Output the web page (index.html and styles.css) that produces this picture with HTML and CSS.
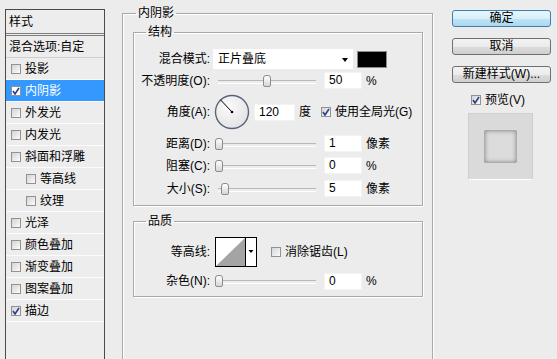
FILE: index.html
```html
<!DOCTYPE html>
<html lang="zh-CN">
<head>
    <meta charset="UTF-8">
    <title>图层样式 - 内阴影</title>
    <link rel="stylesheet" href="styles.css">
</head>
<body>
<div class="dialog">
    <div class="styles-panel">
        <div class="panel-head">样式</div>
        <div class="panel-row blend">混合选项:自定</div>
        <div class="panel-row"><span class="cb"></span>投影</div>
        <div class="panel-row active"><span class="cb"><svg width="8" height="8" viewBox="0 0 8 8"><polyline points="1,4 3,7 7,1" fill="none" stroke="#2b3f8c" stroke-width="1.6"/></svg></span>内阴影</div>
        <div class="panel-row"><span class="cb"></span>外发光</div>
        <div class="panel-row"><span class="cb"></span>内发光</div>
        <div class="panel-row"><span class="cb"></span>斜面和浮雕</div>
        <div class="panel-row sub"><span class="cb"></span>等高线</div>
        <div class="panel-row sub"><span class="cb"></span>纹理</div>
        <div class="panel-row"><span class="cb"></span>光泽</div>
        <div class="panel-row"><span class="cb"></span>颜色叠加</div>
        <div class="panel-row"><span class="cb"></span>渐变叠加</div>
        <div class="panel-row"><span class="cb"></span>图案叠加</div>
        <div class="panel-row"><span class="cb"><svg width="8" height="8" viewBox="0 0 8 8"><polyline points="1,4 3,7 7,1" fill="none" stroke="#2b3f8c" stroke-width="1.6"/></svg></span>描边</div>
    </div>

    <fieldset class="group outer">
        <legend>内阴影</legend>

        <fieldset class="group structure">
            <legend>结构</legend>
            <div class="row h22">
                <span class="lbl">混合模式:</span>
                <div class="select">正片叠底<span class="caret"></span></div>
                <span class="swatch"></span>
            </div>
            <div class="row h21">
                <span class="lbl">不透明度(O):</span>
                <div class="slider"><span class="thumb" style="left:48px"></span></div>
                <span class="field">50</span>
                <span class="unit">%</span>
            </div>
            <div class="row h42">
                <span class="lbl">角度(A):</span>
                <svg class="dial" width="36" height="36" viewBox="0 0 36 36">
                    <defs>
                        <radialGradient id="dialbg" cx="40%" cy="35%" r="70%">
                            <stop offset="0" stop-color="#fbfbfb"/>
                            <stop offset="1" stop-color="#e2e2e2"/>
                        </radialGradient>
                    </defs>
                    <circle cx="18" cy="18" r="16.5" fill="url(#dialbg)" stroke="#56657a" stroke-width="1.4"/>
                    <line x1="18" y1="18" x2="6.5" y2="5.8" stroke="#000" stroke-width="1"/>
                    <circle cx="18" cy="18" r="1.3" fill="#000"/>
                </svg>
                <span class="field wide">120</span>
                <span class="unit">度</span>
                <span class="cb gap"><svg width="8" height="8" viewBox="0 0 8 8"><polyline points="1,4 3,7 7,1" fill="none" stroke="#2b3f8c" stroke-width="1.6"/></svg></span>
                <span>使用全局光(G)</span>
            </div>
            <div class="row h21">
                <span class="lbl">距离(D):</span>
                <div class="slider"><span class="thumb" style="left:0px"></span></div>
                <span class="field">1</span>
                <span class="unit">像素</span>
            </div>
            <div class="row h23">
                <span class="lbl">阻塞(C):</span>
                <div class="slider"><span class="thumb" style="left:0px"></span></div>
                <span class="field">0</span>
                <span class="unit">%</span>
            </div>
            <div class="row h23">
                <span class="lbl">大小(S):</span>
                <div class="slider"><span class="thumb" style="left:6px"></span></div>
                <span class="field">5</span>
                <span class="unit">像素</span>
            </div>
        </fieldset>

        <fieldset class="group quality">
            <legend>品质</legend>
            <div class="row h30">
                <span class="lbl">等高线:</span>
                <svg class="contour" width="42" height="30" viewBox="0 0 42 30">
                    <rect x="0.5" y="0.5" width="41" height="29" fill="#fff" stroke="#000"/>
                    <polygon points="1,29 30,1 30,29" fill="#a4a4a4"/>
                    <line x1="30.5" y1="1" x2="30.5" y2="29" stroke="#000"/>
                    <polygon points="33.5,13 38.5,13 36,16" fill="#000"/>
                </svg>
                <span class="cb aa"></span>
                <span>消除锯齿(L)</span>
            </div>
            <div class="row h22 noise">
                <span class="lbl">杂色(N):</span>
                <div class="slider"><span class="thumb" style="left:0px"></span></div>
                <span class="field">0</span>
                <span class="unit">%</span>
            </div>
        </fieldset>
    </fieldset>

    <div class="side">
        <button class="btn default">确定</button>
        <button class="btn">取消</button>
        <button class="btn last">新建样式(W)...</button>
        <div class="preview-check">
            <span class="cb"><svg width="8" height="8" viewBox="0 0 8 8"><polyline points="1,4 3,7 7,1" fill="none" stroke="#2b3f8c" stroke-width="1.6"/></svg></span>
            <span>预览(V)</span>
        </div>
        <div class="preview">
            <div class="preview-square"></div>
        </div>
    </div>
</div>
</body>
</html>
```

FILE: styles.css
```css
* {
    box-sizing: border-box;
}
html {
    overflow: hidden;
}
body {
    margin: 0;
    height: 359px;
    overflow: hidden;
    background: #ececec;
    color: #000;
    font: 12px/16px "Liberation Sans", "Noto Sans CJK SC", sans-serif;
}
.dialog {
    display: flex;
    align-items: flex-start;
}

/* left list of styles */
.styles-panel {
    margin: 9px 0 0 5px;
    width: 100px;
    height: 350px;
    border: 1px solid #4a4a4a;
    border-bottom: none;
    background: #ededed;
}
.panel-head {
    height: 26px;
    padding: 4px 0 0 3px;
    border-bottom: 3px double #7c7c7c;
}
.panel-row {
    display: flex;
    align-items: center;
    height: 22px;
    padding-left: 5px;
    border-bottom: 1px solid #fbfbfb;
}
.panel-row.blend {
    padding-left: 3px;
    border-bottom-color: #cfcfcf;
}
.panel-row.sub {
    padding-left: 20px;
}
.panel-row.active {
    background: #3399ff;
    color: #fff;
}
.panel-row.active .cb {
    background: #fff;
}

/* checkbox */
.cb {
    flex: none;
    display: inline-flex;
    align-items: center;
    justify-content: center;
    width: 10px;
    height: 10px;
    margin-right: 4px;
    border: 1px solid #929292;
    background: linear-gradient(135deg, #d4d4d4, #fbfbfb);
}
.cb svg {
    display: block;
}

/* group boxes */
.group {
    margin: 0;
    min-width: 0;
    border: 1px solid #a9a9a9;
    box-shadow: 1px 1px 0 #fff, inset 1px 1px 0 #fff;
}
.group > legend {
    padding: 0 2px;
    line-height: 16px;
}
.outer {
    margin: 5px 0 0 17px;
    width: 311px;
    height: 354px;
    padding: 3px 9px 0 10px;
    border-bottom: none;
}
.outer > legend {
    margin-left: 3px;
}
.structure {
    padding: 8px 0 5px 0;
}
.quality {
    margin-top: 7px;
    padding: 8px 0 4px 0;
}
.structure > legend,
.quality > legend {
    margin-left: 12px;
}

/* rows */
.row {
    display: flex;
    align-items: center;
}
.h21 { height: 21px; }
.h22 { height: 22px; }
.h23 { height: 23px; }
.h30 { height: 30px; }
.h42 { height: 42px; }
.noise {
    margin-top: 3px;
}
.lbl {
    flex: none;
    width: 76px;
    text-align: right;
}

.select {
    position: relative;
    flex: none;
    width: 140px;
    height: 20px;
    margin-left: 3px;
    padding-left: 5px;
    line-height: 20px;
    background: #fff;
}
.caret {
    position: absolute;
    right: 5px;
    top: 9px;
    border-top: 4px solid #000;
    border-left: 3.5px solid transparent;
    border-right: 3.5px solid transparent;
}
.swatch {
    flex: none;
    width: 30px;
    height: 17px;
    margin-left: 4px;
    background: #000;
    border: 1px solid #8a8a8a;
}

.slider {
    position: relative;
    flex: none;
    width: 104px;
    height: 12px;
    margin-left: 5px;
}
.slider::before {
    content: "";
    position: absolute;
    left: 3px;
    right: 3px;
    top: 5px;
    height: 2px;
    border-top: 1px solid #b9b9b9;
    border-bottom: 1px solid #fff;
}
.thumb {
    position: absolute;
    top: 0;
    width: 8px;
    height: 12px;
    border: 1px solid #8c8c8c;
    border-radius: 3px 3px 2px 2px;
    background: linear-gradient(#fff, #d6d6d6);
}

.field {
    flex: none;
    width: 38px;
    height: 17px;
    margin-left: 5px;
    padding-left: 4px;
    line-height: 15px;
    background: #fff;
    border: 1px solid #f3f3f3;
}
.field.wide {
    width: 41px;
    margin-left: 4px;
}
.unit {
    margin-left: 4px;
}
.dial {
    flex: none;
    margin-left: 4px;
}
.cb.gap {
    margin-left: 10px;
}
.contour {
    flex: none;
    margin-left: 5px;
}
.cb.aa {
    margin-left: 14px;
}

/* right column */
.side {
    flex: none;
    width: 99px;
    margin-left: 19px;
    padding-top: 10px;
}
.btn {
    display: block;
    width: 99px;
    height: 17px;
    margin: 0 0 11px 0;
    padding: 0;
    font: inherit;
    line-height: 15px;
    color: #000;
    text-align: center;
    border: 1px solid #707070;
    border-radius: 3px;
    background: linear-gradient(#f3f3f3 0%, #ebebeb 50%, #dddddd 51%, #cfcfcf 100%);
}
.btn.default {
    border-color: #3c7fb1;
    background: linear-gradient(#e9f5fc 0%, #d8eff9 50%, #c0e4f5 51%, #acd8ef 100%);
}
.btn.last {
    margin-bottom: 8px;
}
.preview-check {
    display: flex;
    align-items: center;
    height: 18px;
    padding-left: 19px;
}
.preview {
    width: 65px;
    height: 67px;
    margin: 4px 0 0 16px;
    padding: 16px 0 0 15px;
    background: #dadada;
    border: 1px solid #cfcfcf;
    border-bottom-color: #fff;
}
.preview-square {
    width: 33px;
    height: 33px;
    background: #dcdcdc;
    border-radius: 2px;
    box-shadow: inset 0 0 4px 1px #8c8c8c;
}
```
